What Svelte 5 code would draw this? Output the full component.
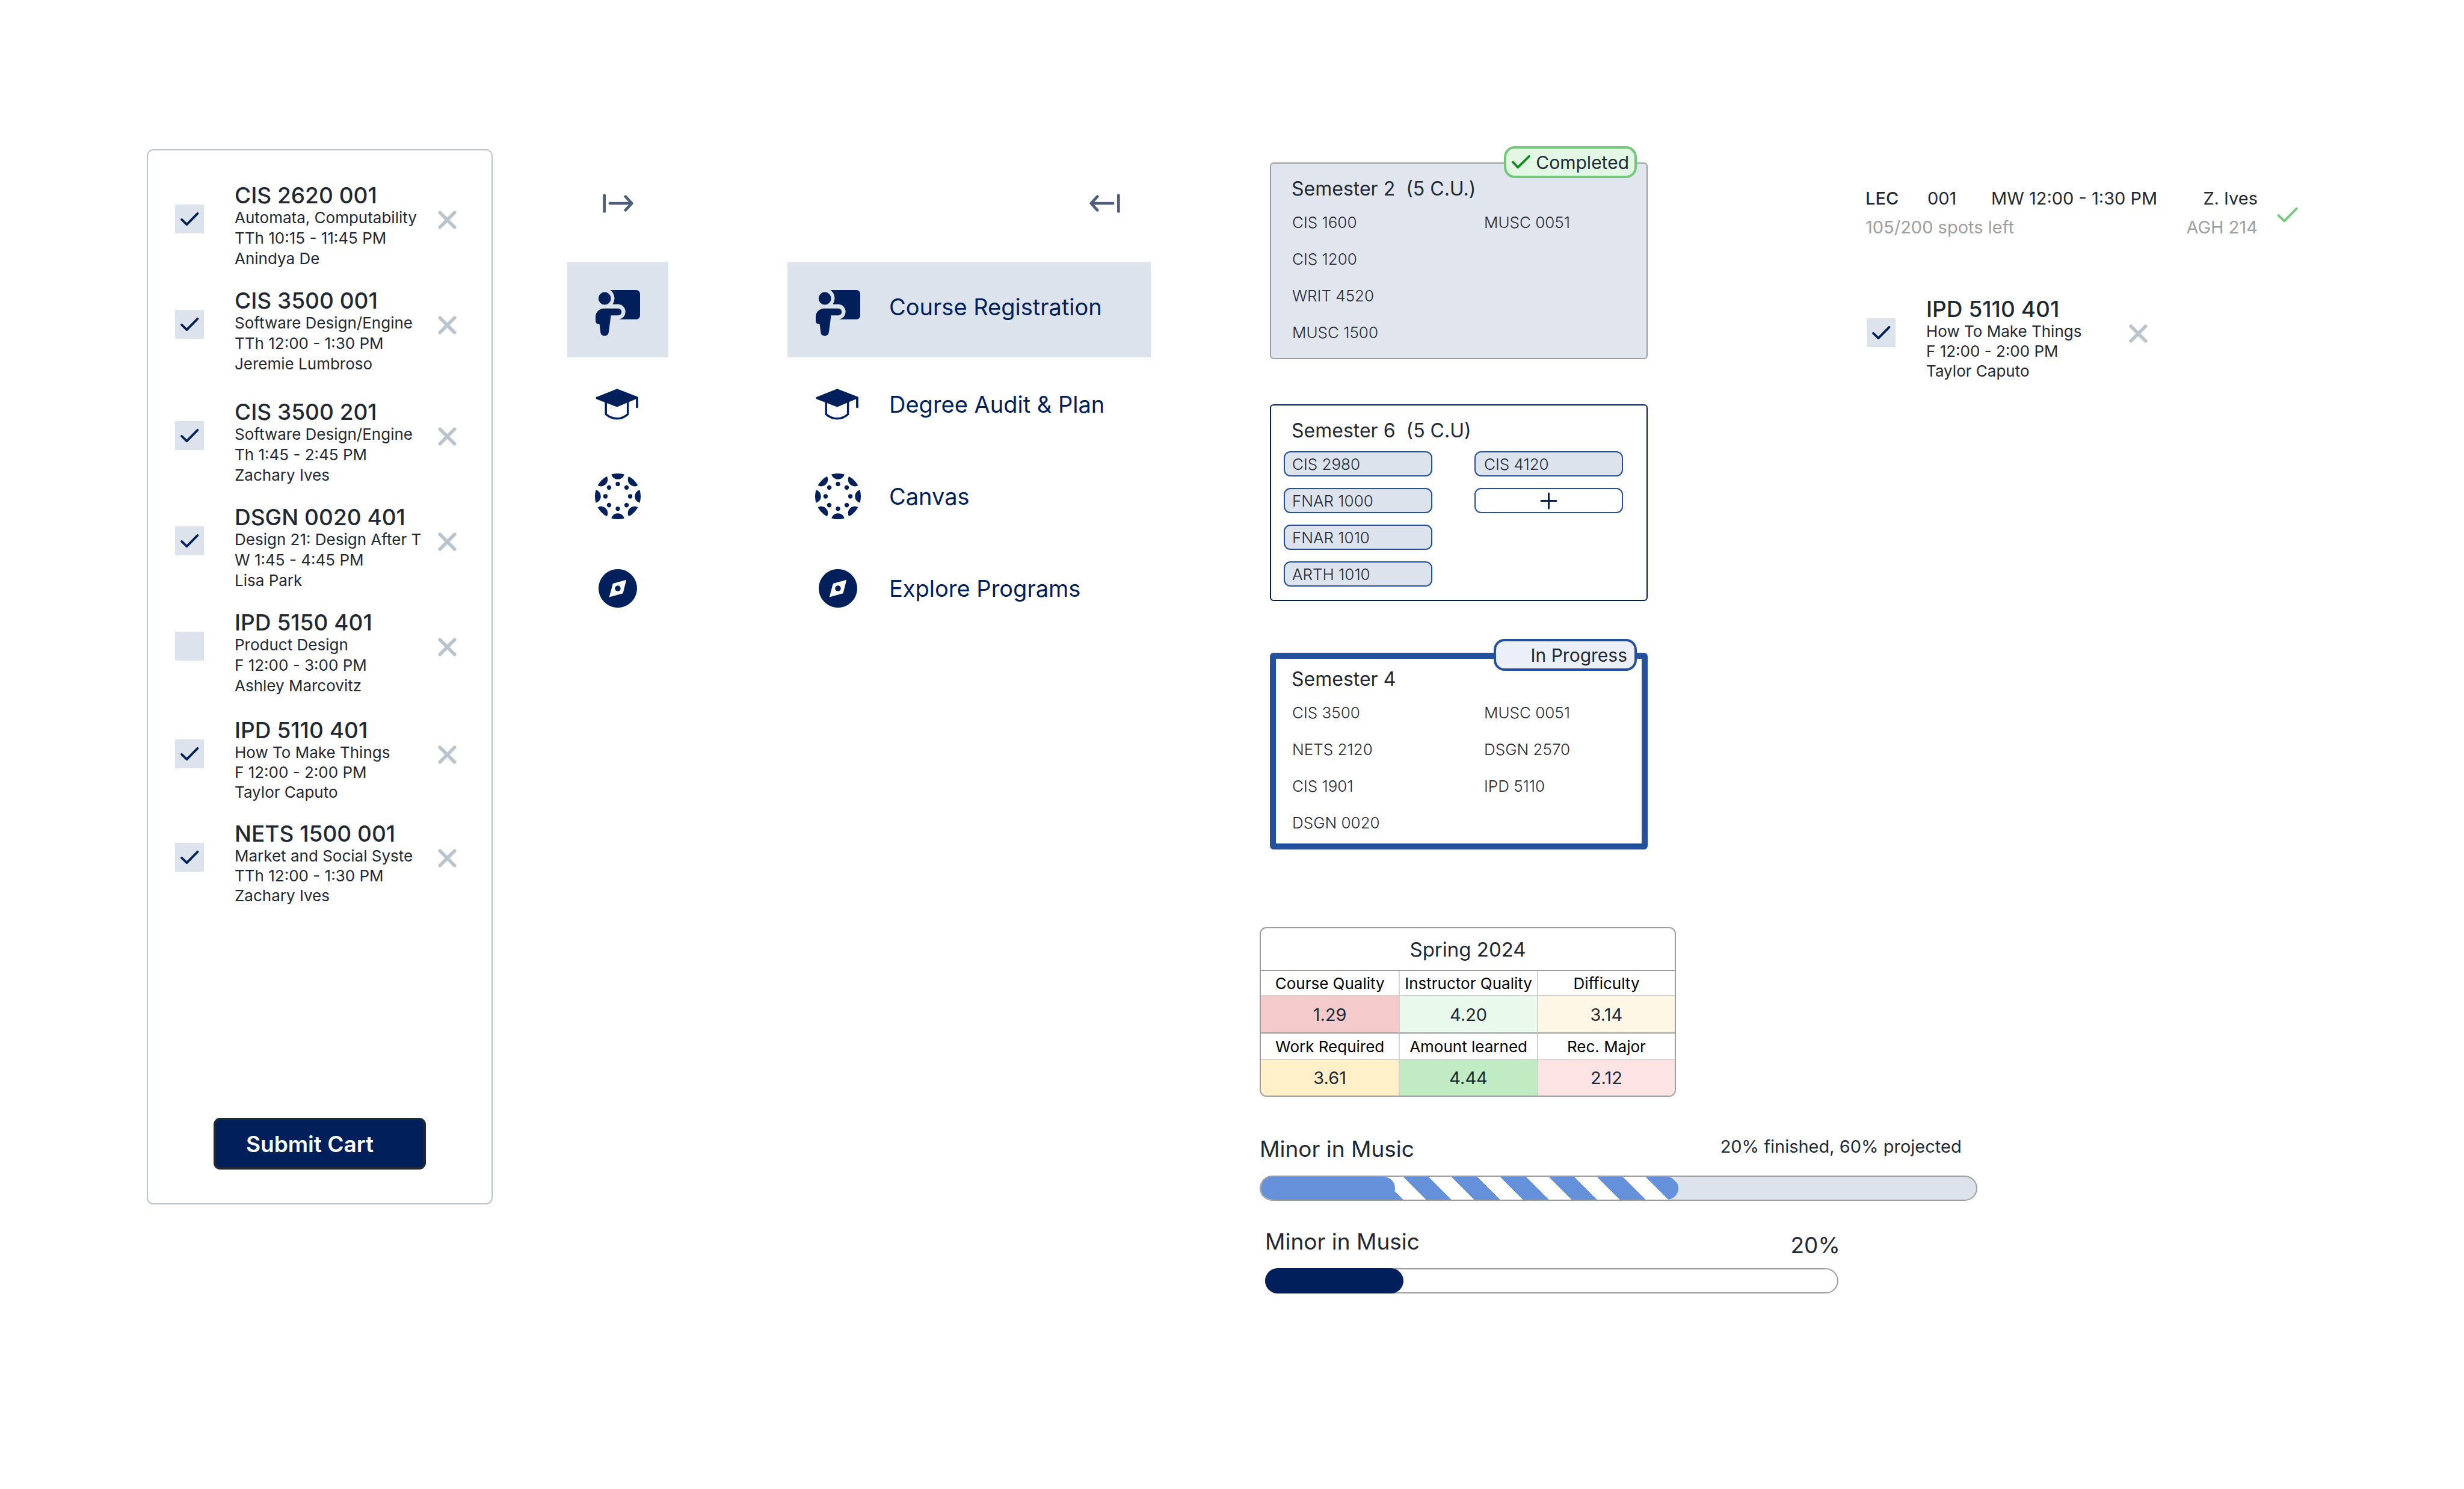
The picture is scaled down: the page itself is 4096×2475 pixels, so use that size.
<script>
  const sections = [
    {
      compact: false,
      items: [
        { code: 'CIS 2620 001', title: 'Automata, Computability', time: 'TTh 10:15 - 11:45 PM', by: 'Anindya De', checked: true },
        { code: 'CIS 3500 001', title: 'Software Design/Engine', time: 'TTh 12:00 - 1:30 PM', by: 'Jeremie Lumbroso', checked: true }
      ]
    },
    {
      compact: false,
      items: [
        { code: 'CIS 3500 201', title: 'Software Design/Engine', time: 'Th 1:45 - 2:45 PM', by: 'Zachary Ives', checked: true },
        { code: 'DSGN 0020 401', title: 'Design 21: Design After T', time: 'W 1:45 - 4:45 PM', by: 'Lisa Park', checked: true },
        { code: 'IPD 5150 401', title: 'Product Design', time: 'F 12:00 - 3:00 PM', by: 'Ashley Marcovitz', checked: false }
      ]
    },
    {
      compact: true,
      items: [
        { code: 'IPD 5110 401', title: 'How To Make Things', time: 'F 12:00 - 2:00 PM', by: 'Taylor Caputo', checked: true },
        { code: 'NETS 1500 001', title: 'Market and Social Syste', time: 'TTh 12:00 - 1:30 PM', by: 'Zachary Ives', checked: true }
      ]
    }
  ];
  const single = { code: 'IPD 5110 401', title: 'How To Make Things', time: 'F 12:00 - 2:00 PM', by: 'Taylor Caputo', checked: true };

  const links = [
    { icon: 'teach', label: 'Course Registration', active: true },
    { icon: 'cap', label: 'Degree Audit & Plan', active: false },
    { icon: 'canvas', label: 'Canvas', active: false },
    { icon: 'compass', label: 'Explore Programs', active: false }
  ];

  const semesters = [
    { kind: 'done', title: 'Semester 2\u00a0 (5 C.U.)', left: ['CIS 1600', 'CIS 1200', 'WRIT 4520', 'MUSC 1500'], right: ['MUSC 0051'] },
    { kind: 'planned', title: 'Semester 6\u00a0 (5 C.U)', left: ['CIS 2980', 'FNAR 1000', 'FNAR 1010', 'ARTH 1010'], right: ['CIS 4120'] },
    { kind: 'current', title: 'Semester 4', left: ['CIS 3500', 'NETS 2120', 'CIS 1901', 'DSGN 0020'], right: ['MUSC 0051', 'DSGN 2570', 'IPD 5110'] }
  ];

  const finished = 18.8;
  const projected = 58.4;
  const minorDone = 24.2;
  const spokes = [0, 45, 90, 135, 180, 225, 270, 315];
</script>

{#snippet courseItem(c)}
  <div class="item">
    <label class="tick">
      <input type="checkbox" checked={c.checked} aria-label={c.code} />
      <svg viewBox="0 0 50 50" aria-hidden="true"><path d="M11.5 26 20.3 34.6 39 15.5" /></svg>
    </label>
    <div class="about">
      <h3>{c.code}</h3>
      <p>{c.title}</p>
      <p>{c.time}</p>
      <p>{c.by}</p>
    </div>
    <button class="remove" type="button" aria-label="Remove {c.code}">
      <svg viewBox="0 0 33 33" aria-hidden="true"><path d="M3.5 3.5 29.5 29.5M29.5 3.5 3.5 29.5" /></svg>
    </button>
  </div>
{/snippet}

{#snippet navIcon(name)}
  {#if name === 'teach'}
    <svg class="glyph low" viewBox="174 46 240 272" aria-hidden="true">
      <path d="M254 78H391A20 20 0 0 1 411 98V212A20 20 0 0 1 391 232H301A40 40 0 0 0 334 193A39 39 0 0 0 295 153H267A55 55 0 0 0 254 78Z" />
      <circle cx="225" cy="122" r="33" />
      <path d="M222 175H296A18 18 0 0 1 296 211H258L246 300Q243 318 228 318H221Q205 318 203 300L198 258Q177 258 177 240V218A45 43 0 0 1 222 175Z" />
    </svg>
  {:else if name === 'cap'}
    <svg class="glyph" viewBox="174 558 240 240" aria-hidden="true">
      <path d="M290 597 396 638Q401 641 401 646L290 692 181 650Q175 645 181 640Z" />
      <path class="line" d="M395 645V692" />
      <path class="line butt" d="M231.500 666V730Q257 753 290 753Q322 753 346.500 730V666" />
    </svg>
  {:else if name === 'canvas'}
    <svg class="glyph" viewBox="174 78 240 240" aria-hidden="true">
      {#each spokes as a}
        <g transform="rotate({a} 294 198)">
          <path d="M260 83A120 120 0 0 1 328 83A35 34 0 0 1 260 83Z" />
          <circle cx="294" cy="133" r="11.500" />
        </g>
      {/each}
    </svg>
  {:else}
    <svg class="glyph" viewBox="174 557 240 240" aria-hidden="true">
      <path fill-rule="evenodd" d="M294 576A101 101 0 1 1 293.900 576ZM339 632 268 652 249 723 321 703ZM294 662A15 15 0 1 1 293.900 662Z" />
    </svg>
  {/if}
{/snippet}

{#snippet arrow()}
  <svg viewBox="0 0 54 34" aria-hidden="true"><path d="M2.700 2.700V31.300M12.500 17H51M40 5 51.200 17 40 29" /></svg>
{/snippet}

<main class="board">
  <section class="cart" aria-label="Course cart">
    {#each sections as s}
      <div class="group" class:compact={s.compact}>
        {#each s.items as c}{@render courseItem(c)}{/each}
      </div>
    {/each}
    <button class="submit" type="button">Submit Cart</button>
  </section>

  <nav class="rail" aria-label="Collapsed navigation">
    <button class="toggle" type="button" aria-label="Expand navigation">{@render arrow()}</button>
    {#each links as l}
      <a href="#{l.icon}" class="link" class:active={l.active} aria-label={l.label}>{@render navIcon(l.icon)}</a>
    {/each}
  </nav>

  <nav class="rail wide" aria-label="Navigation">
    <button class="toggle back" type="button" aria-label="Collapse navigation">{@render arrow()}</button>
    {#each links as l}
      <a href="#{l.icon}" class="link" class:active={l.active}>{@render navIcon(l.icon)}<span>{l.label}</span></a>
    {/each}
  </nav>

  <div class="plans">
    <div class="upper">
      <div class="semesters">
        {#each semesters as s}
          <article class="semester {s.kind}">
            <h2>{s.title}</h2>
            <div class="lists">
              <ul>
                {#each s.left as c}<li class="course">{c}</li>{/each}
              </ul>
              <ul>
                {#each s.right as c}<li class="course">{c}</li>{/each}
                {#if s.kind === 'planned'}
                  <li><button class="course add" type="button" aria-label="Add course">
                    <svg viewBox="0 0 25 25" aria-hidden="true"><path d="M12.500 0V25M0 12.500H25" /></svg>
                  </button></li>
                {/if}
              </ul>
            </div>
            {#if s.kind === 'done'}
              <span class="badge">
                <svg viewBox="0 0 32 24" aria-hidden="true"><path d="M2 12 10.500 21 30 2" /></svg>Completed
              </span>
            {:else if s.kind === 'current'}
              <span class="badge">In Progress</span>
            {/if}
          </article>
        {/each}
      </div>

      <div class="offerings">
        <div class="offering">
          <div class="facts">
            <div class="row main"><strong>LEC</strong><span>001</span><span>MW 12:00 - 1:30 PM</span><span>Z. Ives</span></div>
            <div class="row muted"><span>105/200 spots left</span><span>AGH 214</span></div>
          </div>
          <svg class="ok" viewBox="0 0 37 27" aria-hidden="true"><path d="M2.500 14.500 13 24.500 34.500 2.500" /></svg>
        </div>
        <div class="single compact">{@render courseItem(single)}</div>
      </div>
    </div>

    <div class="ratings">
      <table>
        <thead><tr><th class="term" colspan="3">Spring 2024</th></tr></thead>
        <tbody>
          <tr class="names first"><th>Course Quality</th><th>Instructor Quality</th><th>Difficulty</th></tr>
          <tr class="scores mid"><td class="bad">1.29</td><td class="good">4.20</td><td class="fair">3.14</td></tr>
          <tr class="names"><th>Work Required</th><th>Amount learned</th><th>Rec. Major</th></tr>
          <tr class="scores"><td class="warn">3.61</td><td class="great">4.44</td><td class="poor">2.12</td></tr>
        </tbody>
      </table>
    </div>

    <section class="progress projected">
      <header><h2>Minor in Music</h2><p>20% finished, 60% projected</p></header>
      <div class="track" role="progressbar" aria-label="Minor in Music, projected" aria-valuenow="20" aria-valuemin="0" aria-valuemax="100">
        <div class="stripes" style="width: {projected}%"></div>
        <div class="fill" style="width: {finished}%"></div>
      </div>
    </section>

    <section class="progress plain">
      <header><h2>Minor in Music</h2><p>20%</p></header>
      <div class="track" role="progressbar" aria-label="Minor in Music" aria-valuenow="20" aria-valuemin="0" aria-valuemax="100">
        <div class="fill" style="width: {minorDone}%"></div>
      </div>
    </section>
  </div>
</main>

<style>
  :global(body) { background: #fff; }
  .board, .board * { box-sizing: border-box; }
  h2, h3, p, ul { margin: 0; padding: 0; font-weight: 400; }
  ul { list-style: none; }
  svg { display: block; fill: none; stroke-linecap: round; stroke-linejoin: round; }
  button { font: inherit; background: none; border: 0; padding: 0; cursor: pointer; }

  .board {
    display: grid;
    grid-template-columns:
      minmax(0, 244fr) minmax(0, 575fr) minmax(0, 124fr) minmax(0, 168fr) minmax(0, 198fr)
      minmax(0, 604fr) minmax(0, 181fr) minmax(0, 1726fr) minmax(0, 276fr);
    align-items: start;
    padding: 248px 0;
    font-family: Inter, "Liberation Sans", sans-serif;
    color: #1f2933;
    white-space: nowrap;
  }

  /* Cart */
  .cart {
    grid-column: 2;
    display: flex;
    flex-direction: column;
    padding: 55px 45px 56px;
    border: 2px solid #b8c4ce;
    border-radius: 11px;
  }
  .group { display: flex; flex-direction: column; gap: 33px; padding-right: 13px; }
  .group + .group { margin-top: 43px; }
  .group + .group.compact { margin-top: 37px; }
  .item {
    display: grid;
    grid-template-columns: 48px minmax(0, 1fr) 31px;
    align-items: start;
  }
  .tick { display: grid; margin-top: 35px; }
  .tick input, .tick svg { grid-area: 1 / 1; width: 48px; height: 48px; margin: 0; }
  .tick input { appearance: none; background: #dde3ed; }
  .tick svg { pointer-events: none; visibility: hidden; stroke: #001f5b; stroke-width: 4; }
  .tick input:checked + svg { visibility: visible; }
  .about { padding-left: 51px; }
  .about h3 { font-size: 37px; font-weight: 500; line-height: 40px; }
  .about p { font-size: 26px; line-height: 34px; }
  .compact .about p { line-height: 33px; }
  .remove { margin-top: 45px; }
  .remove svg { width: 31px; height: 31px; stroke: #b8c4ce; stroke-width: 6; }
  .submit {
    align-self: center;
    width: 353px;
    height: 86px;
    margin-top: 353px;
    padding: 0 50px;
    border: 4px solid #1f2933;
    border-radius: 11px;
    background: #001f5b;
    color: #fff;
    font-size: 37px;
    font-weight: 600;
    text-align: left;
  }

  /* Navigation */
  .rail { grid-column: 4; display: flex; flex-direction: column; gap: 3px; margin-top: 74px; }
  .rail.wide { grid-column: 6; }
  .toggle { align-self: center; margin-bottom: 79px; }
  .toggle svg { width: 51px; height: 32px; stroke: #4f5d7c; stroke-width: 5; }
  .back { align-self: flex-end; margin-right: 51px; }
  .back svg { transform: scaleX(-1); }
  .link {
    display: flex;
    align-items: center;
    justify-content: center;
    height: 150px;
    color: #001f5b;
    text-decoration: none;
    font-size: 38px;
    font-weight: 400;
  }
  .link.active { height: 158px; background: #dde3ed; }
  .wide .link { justify-content: flex-start; gap: 47px; padding-left: 46px; }
  .wide .active span { padding-bottom: 10px; }
  .glyph { width: 76px; height: 76px; fill: #001f5b; }
  .glyph.low { height: 86px; }
  .glyph .line { fill: none; stroke: #001f5b; stroke-width: 12; }
  .glyph .butt { stroke-linecap: butt; stroke-width: 11; }

  /* Plans */
  .plans { grid-column: 8; margin-top: 22px; }
  .upper {
    display: grid;
    grid-template-columns: minmax(0, 628fr) minmax(0, 719fr);
    column-gap: 362px;
    align-items: start;
    padding-left: 17px;
  }
  .semesters { display: flex; flex-direction: column; gap: 75px; }
  .semester {
    --edge: 2px;
    --line: #9e9e9e;
    position: relative;
    padding: calc(24px - var(--edge)) calc(41px - var(--edge)) calc(24px - var(--edge)) calc(23px - var(--edge));
    border: var(--edge) solid var(--line);
    border-radius: 6px;
  }
  .semester h2 { padding-left: 13px; font-size: 32px; line-height: 40px; }
  .done { background: #e1e5ed; }
  .planned { --line: #001f5b; }
  .current { --edge: 10px; --line: #2351a0; margin-top: 11px; }
  .lists { display: grid; grid-template-columns: 1fr 1fr; column-gap: 70px; margin-top: 14px; }
  .lists ul { display: flex; flex-direction: column; gap: 19px; }
  .course {
    display: flex;
    align-items: center;
    width: 100%;
    height: 42px;
    padding-left: 12px;
    border: 2px solid transparent;
    border-radius: 11px;
    font-size: 26px;
    font-weight: 300;
  }
  .lists ul + ul .course { padding-left: 14px; }
  .planned .course { border-color: #2351a0; background: #dde3ed; }
  .planned .lists .add { justify-content: center; padding: 0; background: #fff; }
  .add svg { width: 25px; height: 25px; stroke: #001f5b; stroke-width: 3; overflow: visible; }
  .badge {
    position: absolute;
    top: -29px;
    right: 16px;
    display: flex;
    align-items: center;
    justify-content: flex-end;
    gap: 9px;
    height: 53px;
    padding: 0 9px;
    border: 4px solid #72c779;
    border-radius: 18px;
    background: #e2f7e4;
    font-size: 30px;
  }
  .badge svg { width: 31px; height: 23px; stroke: #0f8a1e; stroke-width: 4; }
  .current .badge { top: -33px; right: 8px; min-width: 238px; padding-right: 12px; border-color: #2351a0; background: #ebeff9; }

  /* Offerings */
  .offerings { margin-top: 36px; }
  .offering { display: flex; align-items: center; gap: 32px; font-size: 29px; line-height: 48px; }
  .facts { flex: 1; }
  .row { display: flex; justify-content: space-between; }
  .row.main { display: grid; grid-template-columns: 103px 106px 1fr auto; }
  .row strong { font-weight: 450; }
  .muted { color: #9e9e9e; }
  .ok { width: 35px; height: 26px; margin-top: 6px; stroke: #72c779; stroke-width: 4; }
  .single { width: 467px; margin: 92px 0 0 2px; }

  /* Ratings */
  .ratings {
    width: 40.1%;
    margin-top: 129px;
    border: 2px solid #9e9e9e;
    border-radius: 11px;
    overflow: hidden;
  }
  table { width: 100%; table-layout: fixed; border-collapse: separate; border-spacing: 0; text-align: center; }
  th, td { padding: 0; font-weight: 400; border: 0 solid #d3d3d3; }
  th + th, td + td { border-left-width: 2px; }
  .term { height: 71px; font-size: 33px; border-bottom: 2px solid #9e9e9e; }
  .names th { height: 44px; color: #000; font-size: 26px; border-bottom-width: 2px; }
  .names.first th { height: 42px; }
  .scores td { height: 59px; font-size: 29px; }
  .scores.mid td { height: 62px; border-bottom: 2px solid #9e9e9e; }
  .bad { background: #f4caca; }
  .good { background: #e9faec; }
  .fair { background: #fff7e5; }
  .warn { background: #fff0c9; }
  .great { background: #c0ebc3; }
  .poor { background: #fce4e4; }

  /* Progress */
  .progress header { display: flex; align-items: flex-start; justify-content: space-between; }
  .progress h2 { font-size: 37px; line-height: 44px; }
  .track { display: grid; height: 42px; border: 2px solid #9e9e9e; border-radius: 21px; }
  .track > div { grid-area: 1 / 1; border-radius: 19px; }
  .projected { width: 69.1%; margin-top: 65px; }
  .projected header { padding-right: 26px; }
  .projected p { font-size: 29px; line-height: 36px; }
  .projected .track { margin-top: 22px; background: #dde3ed; }
  .projected .fill { background: #6491d9; }
  .stripes {
    background: repeating-linear-gradient(45deg, #fff 0 23px, #6491d9 23px 53px, #fff 53px 57px);
  }
  .plain { width: 55.2%; margin: 46px 0 0 9px; }
  .plain header { margin-right: -3px; }
  .plain p { font-size: 37px; line-height: 56px; }
  .plain .track { margin-top: 10px; }
  .plain .track .fill { margin: -2px; border-radius: 21px; background: #001f5b; }
</style>
